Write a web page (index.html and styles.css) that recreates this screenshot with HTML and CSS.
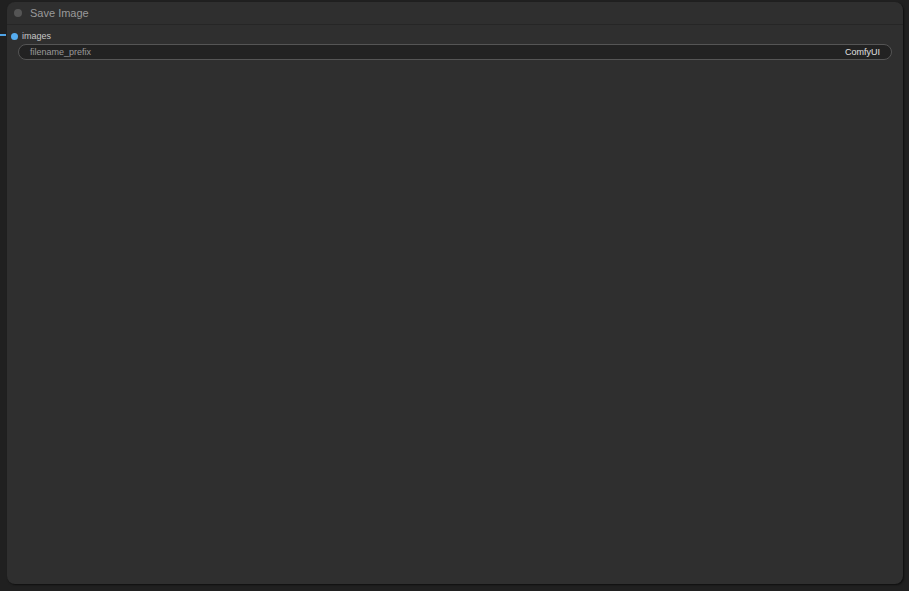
FILE: index.html
```html
<!DOCTYPE html>
<html lang="en">
<head>
    <meta charset="UTF-8">
    <title>Save Image</title>
    <link rel="stylesheet" href="styles.css">
</head>
<body>

<div class="canvas">
    <div class="link"></div>
    <div class="node">
        <div class="node-title">
            <span class="title-dot"></span>
            <span class="title-text">Save Image</span>
        </div>
        <div class="node-body">
            <div class="slot">
                <span class="slot-dot"></span>
                <span class="slot-label">images</span>
            </div>
            <div class="widget">
                <span class="widget-name">filename_prefix</span>
                <span class="widget-value">ComfyUI</span>
            </div>
        </div>
    </div>
</div>

</body>
</html>
```

FILE: styles.css
```css
html, body {
    margin: 0;
    height: 100%;
}
body {
    font-family: "Liberation Sans", Arial, sans-serif;
    background-color: #202020;
    overflow: hidden;
}
.canvas {
    position: relative;
    height: 100%;
    padding: 2px 6px 7px 7px;
    box-sizing: border-box;
}
.link {
    position: absolute;
    left: 0;
    top: 34px;
    width: 6px;
    height: 2px;
    background-color: #4fa3e6;
}
.node {
    height: 100%;
    background-color: #2f2f2f;
    border-radius: 8px;
    box-shadow: 1px 1px 2px rgba(0, 0, 0, 0.6);
    display: flex;
    flex-direction: column;
}
.node-title {
    height: 22px;
    border-bottom: 1px solid #262626;
    display: flex;
    align-items: center;
    padding-left: 7px;
    gap: 8px;
}
.title-dot {
    width: 8px;
    height: 8px;
    border-radius: 50%;
    background-color: #555;
}
.title-text {
    color: #9a9a9a;
    font-size: 11px;
}
.node-body {
    padding: 4px 11px 0 4px;
}
.slot {
    display: flex;
    align-items: center;
    gap: 4px;
    height: 14px;
}
.slot-dot {
    width: 7px;
    height: 7px;
    border-radius: 50%;
    background-color: #55acef;
}
.slot-label {
    color: #c8c8c8;
    font-size: 9px;
}
.widget {
    margin: 1px 0 0 7px;
    height: 14px;
    background-color: #222;
    border: 1px solid #555;
    border-radius: 8px;
    display: flex;
    align-items: center;
    justify-content: space-between;
    padding: 0 11px;
    font-size: 9px;
}
.widget-name {
    color: #9a9a9a;
}
.widget-value {
    color: #e0e0e0;
}
```
